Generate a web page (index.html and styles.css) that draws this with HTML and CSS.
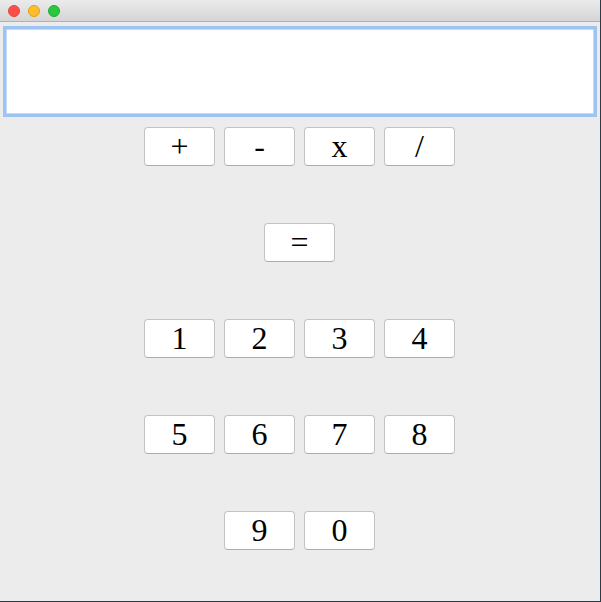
FILE: index.html
```html
<!DOCTYPE html>
<html>
<head>
<meta charset="utf-8">
<link rel="stylesheet" href="styles.css">
</head>
<body>
<div class="window">
  <div class="titlebar">
    <span class="dot red"></span>
    <span class="dot yellow"></span>
    <span class="dot green"></span>
  </div>
  <div class="display"></div>
  <div class="pad">
    <div class="row">
      <button class="key">+</button>
      <button class="key">-</button>
      <button class="key">x</button>
      <button class="key">/</button>
    </div>
    <div class="row">
      <button class="key">=</button>
    </div>
    <div class="row">
      <button class="key">1</button>
      <button class="key">2</button>
      <button class="key">3</button>
      <button class="key">4</button>
    </div>
    <div class="row">
      <button class="key">5</button>
      <button class="key">6</button>
      <button class="key">7</button>
      <button class="key">8</button>
    </div>
    <div class="row">
      <button class="key">9</button>
      <button class="key">0</button>
    </div>
  </div>
</div>
</body>
</html>
```
FILE: styles.css
```css
html, body {
  margin: 0;
  padding: 0;
}
body {
  background: #2f3b44;
  width: 601px;
  height: 602px;
  overflow: hidden;
}
.window {
  width: 600px;
  height: 601px;
  background: #ececec;
  display: flex;
  flex-direction: column;
}
.titlebar {
  height: 21px;
  background: linear-gradient(#ebebeb, #d5d5d5);
  border-bottom: 1px solid #b1b1b1;
  display: flex;
  align-items: center;
  gap: 8px;
  padding-left: 8px;
}
.dot {
  width: 12px;
  height: 12px;
  border-radius: 50%;
  box-sizing: border-box;
}
.red { background: #fc4f4c; border: 1px solid #e2463f; }
.yellow { background: #fdbd2c; border: 1px solid #e1a116; }
.green { background: #2ac73f; border: 1px solid #1dad2b; }
.display {
  margin: 4px 0 0 3px;
  width: 594px;
  height: 91px;
  box-sizing: border-box;
  background: #fff;
  border: 3px solid #9cc3f2;
  box-shadow: inset 0 0 0 1px #c4daf5;
}
.pad {
  display: flex;
  flex-direction: column;
  gap: 57px;
  padding-top: 10px;
  padding-right: 1px;
}
.row {
  display: flex;
  justify-content: center;
  gap: 9px;
}
.key {
  width: 71px;
  height: 39px;
  box-sizing: border-box;
  margin: 0;
  padding: 0 0 1px 0;
  background: #fff;
  border: 1px solid #c3c3c3;
  border-bottom-color: #adadad;
  border-radius: 4px;
  font-family: "Liberation Serif", "Times New Roman", serif;
  font-size: 32px;
  line-height: 36px;
  color: #000;
  display: flex;
  align-items: center;
  justify-content: center;
}
```
